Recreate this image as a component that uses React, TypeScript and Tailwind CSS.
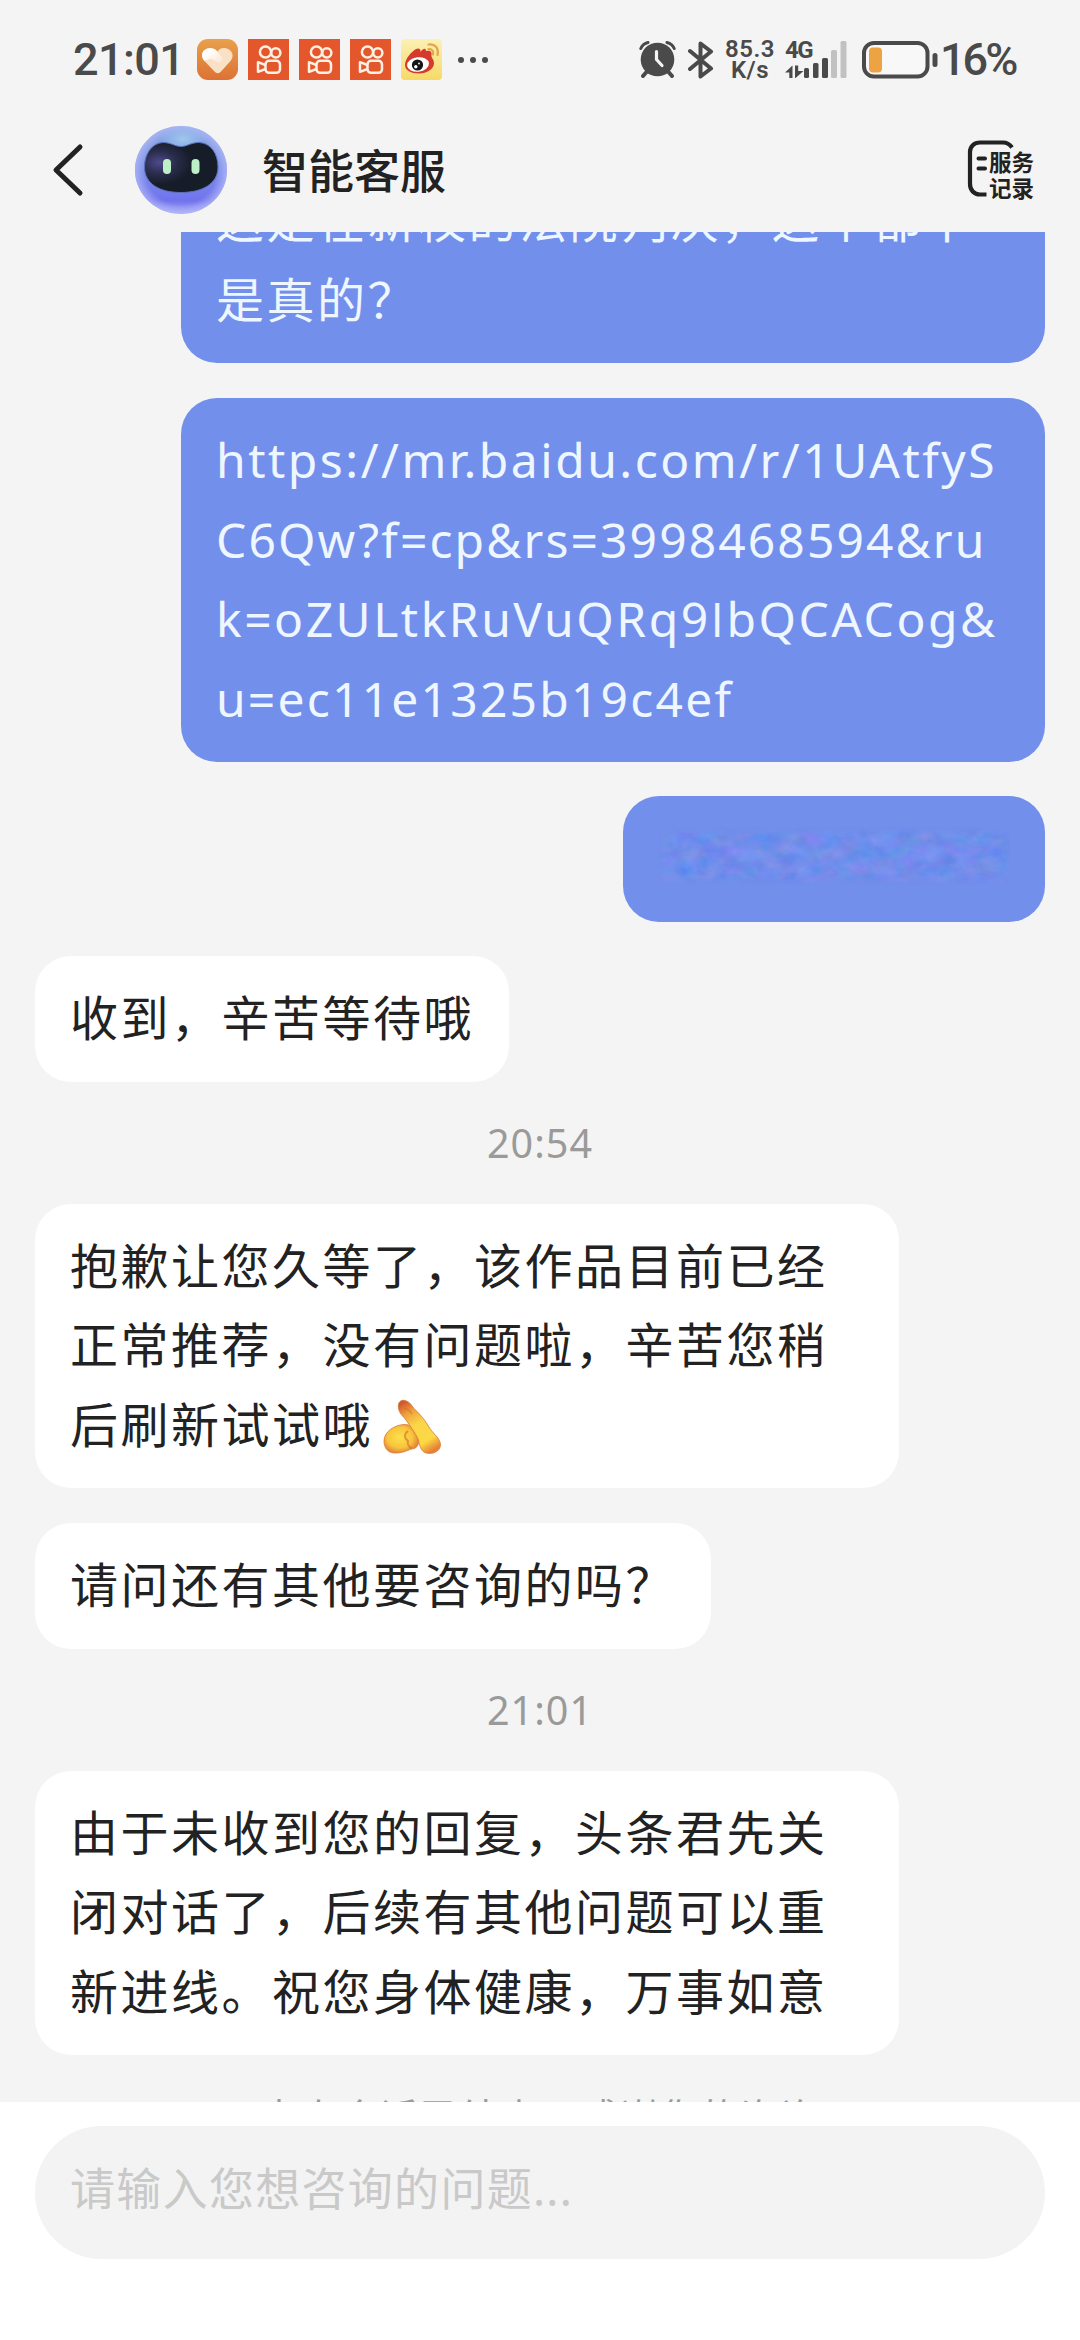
import clsx from 'clsx';
import React, { FC, ReactNode } from 'react';

const HeartIcon: FC = () => (
  <svg className="w-[41px] h-[41px]" viewBox="0 0 41 41">
    <defs>
      <linearGradient id="heart-bg" x1="0" y1="0" x2="0" y2="1">
        <stop offset="0" stopColor="#e9a04c" />
        <stop offset="1" stopColor="#dc7234" />
      </linearGradient>
      <linearGradient id="heart-lobe" x1="0" y1="0" x2="1" y2="1">
        <stop offset="0.3" stopColor="#fff" />
        <stop offset="1" stopColor="#fff" stopOpacity="0.15" />
      </linearGradient>
    </defs>
    <rect width="41" height="41" rx="11" fill="url(#heart-bg)" />
    <path
      d="M20.500 12.500C23 8.500 28 8 32 10.500C36.500 13.500 36.500 18.500 33.500 22L24 32.500C22 34.800 19.500 34.800 17.500 32.500L7.500 22C4 18 4.500 13 8.500 10.500C13 8 18 9 20.500 12.500Z"
      fill="#fbe0c8"
    />
    <path
      d="M8 10.800C12 8.300 17 9 19.500 12L25 18.500C26.500 21 24 24.500 21 23.500L14 19.500L7.500 22C4 18 4.300 13.200 8 10.800Z"
      fill="url(#heart-lobe)"
    />
  </svg>
);

const KuaishouIcon: FC = () => (
  <svg className="w-[41px] h-[41px]" viewBox="0 0 41 41">
    <rect width="41" height="41" fill="#e4572c" />
    <g fill="none" stroke="#fff0e2" strokeWidth="2.500" strokeLinejoin="round">
      <circle cx="17.500" cy="13" r="5.600" />
      <circle cx="27.800" cy="13.800" r="4.600" />
      <rect x="17.500" y="21.800" width="14.500" height="12" rx="3.600" />
      <path d="M17.500 26L10 23.200V32.800L17.500 30" />
    </g>
  </svg>
);

const WeiboIcon: FC = () => (
  <svg className="w-[41px] h-[41px]" viewBox="0 0 41 41">
    <defs>
      <linearGradient id="weibo-bg" x1="0" y1="0" x2="0" y2="1">
        <stop offset="0" stopColor="#fbf1b4" />
        <stop offset="1" stopColor="#f7d968" />
      </linearGradient>
    </defs>
    <rect width="41" height="41" rx="4" fill="url(#weibo-bg)" />
    <path
      d="M4 26C4 20 10 13 15 10C18 8.500 20 10 19.500 13C22 9.500 25 8.500 25 12C28 11 31.500 12 30.500 16C30 19 33 20 33 24C33 30 26 34.500 18 34.500C10 34.500 4 31.500 4 26Z"
      fill="#d63a2c"
    />
    <ellipse cx="17" cy="25.500" rx="11" ry="7.200" fill="#fff" transform="rotate(-6 17 25.500)" />
    <circle cx="16.500" cy="26" r="5.600" fill="#151515" />
    <circle cx="14.800" cy="27.800" r="1.700" fill="#fff" />
    <circle cx="18" cy="24.500" r="0.900" fill="#fff" />
    <g fill="none" stroke="#e5a44b" strokeWidth="2.200" strokeLinecap="round">
      <path d="M27.500 5.500C34 4.500 38 9 36.500 16" />
      <path d="M27.500 10.200C31 9.800 32.800 12 32 15.500" />
    </g>
  </svg>
);

const AlarmIcon: FC = () => (
  <svg className="w-[37px] h-[37px]" viewBox="0 0 37 37">
    <circle cx="18.500" cy="18.500" r="16.800" fill="#4a4a4a" />
    <g fill="none" stroke="#4a4a4a" strokeLinecap="round">
      <path d="M1.800 7.500C3 4.500 5.500 2.300 9 1.500M35.200 7.500C34 4.500 31.500 2.300 28 1.500" strokeWidth="3" />
      <path d="M7.500 31L4 35M29.500 31L33 35" strokeWidth="4" />
    </g>
    <path d="M17.500 10.500V18.500L23 24.500" fill="none" stroke="#f4f4f4" strokeWidth="3.200" strokeLinecap="round" />
  </svg>
);

const BluetoothIcon: FC = () => (
  <svg className="w-[26px] h-[38px]" viewBox="0 0 26 38">
    <path
      d="M2 10L23 27.500L12.500 35.500V2.500L23 10.500L2 28"
      fill="none"
      stroke="#4a4a4a"
      strokeWidth="4"
      strokeLinejoin="round"
      strokeLinecap="round"
    />
  </svg>
);

const SignalIcon: FC = () => (
  <svg className="w-[62px] h-[37px]" viewBox="0 0 62 37">
    <g fill="#4a4a4a">
      <path d="M0 31.500L7.500 24.500V37.500H4.300V31.500ZM10 24.500H13.200V30H18.500L10 37.500Z" />
      <rect x="19" y="27" width="5" height="10" rx="1.500" />
      <rect x="28" y="22" width="5.500" height="15" rx="1.500" />
      <rect x="37" y="17" width="6" height="20" rx="1.500" />
    </g>
    <g fill="#c1c1c1">
      <rect x="46" y="9" width="6" height="28" rx="1.500" />
      <rect x="55.500" y="0" width="6" height="37" rx="1.500" />
    </g>
  </svg>
);

const BatteryIcon: FC = () => (
  <svg className="w-[76px] h-[38px]" viewBox="0 0 76 38">
    <rect x="2" y="2" width="63.500" height="33.500" rx="10" fill="#f8f8f8" stroke="#4a4a4a" strokeWidth="4" />
    <rect x="7" y="6.500" width="13" height="25" rx="4" fill="#eda244" />
    <rect x="70.500" y="12" width="5" height="14" rx="2.500" fill="#4a4a4a" />
  </svg>
);

const StatusBar: FC = () => (
  <div className="flex items-center h-[118px] pt-px pl-[73px] text-[#4a4a4a] font-['Roboto',sans-serif] shrink-0">
    <span className="w-[124px] text-[45px] leading-[46px] font-medium tracking-[-0.6px] whitespace-nowrap">
      21:01
    </span>
    <div className="flex items-center gap-[10px]">
      <HeartIcon />
      <KuaishouIcon />
      <KuaishouIcon />
      <KuaishouIcon />
      <WeiboIcon />
    </div>
    <div className="flex gap-[6px] ml-[16px]">
      <span className="w-[6px] h-[6px] rounded-full bg-[#4a4a4a]" />
      <span className="w-[6px] h-[6px] rounded-full bg-[#4a4a4a]" />
      <span className="w-[6px] h-[6px] rounded-full bg-[#4a4a4a]" />
    </div>
    <div className="flex items-center ml-[151px]">
      <AlarmIcon />
      <div className="ml-[12px]">
        <BluetoothIcon />
      </div>
      <div className="flex flex-col items-center w-[52px] ml-[10px] text-[24px] leading-[21px] font-semibold tracking-[0.5px]">
        <span>85.3</span>
        <span>K/s</span>
      </div>
      <div className="relative ml-[9px]">
        <SignalIcon />
        <span className="absolute left-0 top-[-3px] text-[24px] leading-[24px] font-bold tracking-[-1.5px]">4G</span>
      </div>
      <div className="ml-[15px]">
        <BatteryIcon />
      </div>
      <span className="ml-[2px] text-[45px] leading-[46px] font-medium tracking-[-3px]">16%</span>
    </div>
  </div>
);

const Avatar: FC = () => (
  <svg className="w-[92px] h-[90px]" viewBox="0 0 92 90">
    <defs>
      <linearGradient id="bot-shell" x1="0" y1="0" x2="0" y2="1">
        <stop offset="0" stopColor="#86a4e0" />
        <stop offset="0.4" stopColor="#7f96e8" />
        <stop offset="0.85" stopColor="#7173ee" />
        <stop offset="1" stopColor="#a9aaf4" />
      </linearGradient>
      <radialGradient id="bot-edge" cx="0.5" cy="0.5" r="0.5">
        <stop offset="0.78" stopColor="#b4baf8" stopOpacity="0" />
        <stop offset="1" stopColor="#b4baf8" stopOpacity="0.75" />
      </radialGradient>
      <radialGradient id="bot-shine" cx="0.5" cy="0.5" r="0.5">
        <stop offset="0" stopColor="#9fc8ee" />
        <stop offset="1" stopColor="#9fc8ee" stopOpacity="0" />
      </radialGradient>
      <radialGradient id="bot-face" cx="0.2" cy="0.4" r="0.45">
        <stop offset="0" stopColor="#4f4a8c" />
        <stop offset="0.5" stopColor="#2a2d4c" />
        <stop offset="1" stopColor="#161c28" />
      </radialGradient>
    </defs>
    <ellipse cx="46" cy="45" rx="46" ry="44" fill="url(#bot-shell)" />
    <ellipse cx="46" cy="45" rx="46" ry="44" fill="url(#bot-edge)" />
    <ellipse cx="48" cy="14" rx="24" ry="13" fill="url(#bot-shine)" />
    <path
      d="M46 21.500C52 21.500 56 17.500 64 17.500C76 18 83 29 83 42C83 59 67 67.500 46 67.500C25 67.500 9.500 59 9.500 42C9.500 29 17 18 28 17.500C36 17.500 40 21.500 46 21.500Z"
      fill="url(#bot-face)"
      stroke="#5a72b8"
      strokeWidth="1"
    />
    <rect x="28" y="34" width="8" height="15" rx="4" fill="#bdf0c6" />
    <rect x="56.500" y="34" width="8" height="15" rx="4" fill="#bdf0c6" />
  </svg>
);

const Header: FC = () => (
  <div className="flex items-center h-[114px] pb-[10px] pl-[50px] pr-[44px] shrink-0">
    <svg className="w-[34px] h-[54px]" viewBox="0 0 34 54">
      <path
        d="M30 4L6 27L30 50"
        fill="none"
        stroke="#222"
        strokeWidth="5"
        strokeLinecap="round"
        strokeLinejoin="round"
      />
    </svg>
    <div className="ml-[51px]">
      <Avatar />
    </div>
    <h1 className="ml-[35px] text-[46px] leading-[60px] font-medium text-[#222]">智能客服</h1>
    <div className="relative w-[70px] h-[64px] ml-auto">
      <svg className="w-[70px] h-[64px]" viewBox="0 0 70 64">
        <path
          d="M46 9.500C43.500 6 41 4.500 37 4.500H14C8 4.500 4 8.500 4 14V46C4 52 8 56.500 14 56.500H20.500"
          fill="none"
          stroke="#222"
          strokeWidth="4.200"
        />
        <path d="M12.500 20.500H19M12.500 30.500H19" stroke="#222" strokeWidth="4" strokeLinecap="round" />
      </svg>
      <span className="absolute left-[23px] top-[12px] w-[46px] text-[22.500px] leading-[26px] font-bold text-[#222]">
        服务记录
      </span>
    </div>
  </div>
);

interface BubbleProps {
  own?: boolean;
  wide?: boolean;
  className?: string;
  children: ReactNode;
}

const Bubble: FC<BubbleProps> = ({ own, wide, className, children }) => (
  <div
    className={clsx(
      'px-[35px] pt-[22px] pb-[24px] rounded-[36px] text-[48px] leading-[79.5px] tracking-[2.5px] whitespace-nowrap shrink-0',
      own ? 'self-end bg-[#728fec] text-[#eef6ff]' : 'self-start bg-white text-[#222]',
      wide ? 'w-[864px]' : 'w-fit',
      className
    )}
  >
    {children}
  </div>
);

const Time: FC<{ children: ReactNode }> = ({ children }) => (
  <div className="h-[50px] mt-[36px] mb-[36px] text-center text-[39.5px] leading-[50px] tracking-[1px] text-[#9a9a9a]">
    {children}
  </div>
);

const Smudge: FC = () => (
  <svg className="w-[352px] h-[80px]" viewBox="0 0 352 80">
    <defs>
      <filter id="smudge" x="0" y="0" width="100%" height="100%" colorInterpolationFilters="sRGB">
        <feTurbulence type="fractalNoise" baseFrequency="0.05 0.07" numOctaves="3" seed="8" />
        <feColorMatrix values="0.5 0 0 0 0.19  0 0.25 0 0 0.425  0 0 0.2 0 0.82  0 0 0 0 0.5" />
      </filter>
      <filter id="soften">
        <feGaussianBlur stdDeviation="3" />
      </filter>
      <mask id="smudge-mask">
        <rect x="3" y="14" width="346" height="48" fill="#fff" filter="url(#soften)" />
      </mask>
    </defs>
    <g mask="url(#smudge-mask)">
      <rect width="352" height="80" filter="url(#smudge)" />
    </g>
  </svg>
);

const FoldedHands: FC = () => (
  <svg className="inline-block w-[60px] h-[56px] ml-[9px] align-[-12px]" viewBox="0 0 60 56">
    <defs>
      <radialGradient id="palm" cx="0.45" cy="0.45" r="0.6">
        <stop offset="0" stopColor="#fde04a" />
        <stop offset="0.6" stopColor="#f8c53c" />
        <stop offset="1" stopColor="#e0763a" />
      </radialGradient>
      <linearGradient id="fingers" x1="0.2" y1="0" x2="0.7" y2="1">
        <stop offset="0" stopColor="#d0582c" />
        <stop offset="0.2" stopColor="#eda03c" />
        <stop offset="0.45" stopColor="#fbd548" />
        <stop offset="0.8" stopColor="#fcd944" />
        <stop offset="1" stopColor="#e58238" />
      </linearGradient>
    </defs>
    <path
      d="M2 42C2 33 12 26 22 25.500C30 25 36 32 37 40C37 47 34 50 29 50C25 52 18 54.500 12 54C5 53.500 2 48 2 42Z"
      fill="url(#palm)"
      stroke="#dc7a38"
      strokeWidth="0.800"
    />
    <path d="M26 32C22 35 22 39 26 42C25 45 27 48 30 49.500" fill="none" stroke="#d06a2c" strokeWidth="2" opacity="0.600" />
    <path
      d="M16.500 9C15.500 3 19 0.500 23 1.500C27 2.500 29 5 31.500 9C37 14 43 21 47 28C51 35 58.500 39 58.500 46C58 53 50 55.500 44 54C38 52 38 46 36 40C33.500 34 28 27 24 21C20 16 17 14 16.500 9Z"
      fill="url(#fingers)"
      stroke="#d87a35"
      strokeWidth="0.800"
    />
    <path d="M22 9C25 10 28 11 30 15" fill="none" stroke="#d06a2c" strokeWidth="1.500" opacity="0.500" />
  </svg>
);

const App: FC = () => {
  return (
    <div className="flex flex-col w-[1080px] h-[2340px] overflow-hidden bg-[#f4f4f4] font-['Noto_Sans','Noto_Sans_CJK_SC',sans-serif]">
      <StatusBar />
      <Header />
      <main className="flex flex-col flex-1 min-h-0 px-[35px] overflow-hidden">
        <Bubble own wide className="-mt-[74px]">
          这是在新校的法院判决，这个都不
          <br />
          是真的？
        </Bubble>
        <Bubble own wide className="mt-[35px]">
          https://mr.baidu.com/r/1UAtfyS
          <br />
          <span className="tracking-[2.1px]">C6Qw?f=cp&amp;rs=3998468594&amp;ru</span>
          <br />
          k=oZULtkRuVuQRq9<span className="font-['Open_Sans']">I</span>bQCACog&amp;
          <br />
          <span className="tracking-[2.2px]">u=ec11e1325b19c4ef</span>
        </Bubble>
        <Bubble own className="flex items-center h-[126px] mt-[34px]">
          <Smudge />
        </Bubble>
        <Bubble className="mt-[34px]">收到，辛苦等待哦</Bubble>
        <Time>20:54</Time>
        <Bubble wide>
          抱歉让您久等了，该作品目前已经
          <br />
          正常推荐，没有问题啦，辛苦您稍
          <br />
          后刷新试试哦
          <FoldedHands />
        </Bubble>
        <Bubble className="mt-[35px]">请问还有其他要咨询的吗？</Bubble>
        <Time>21:01</Time>
        <Bubble wide>
          由于未收到您的回复，头条君先关
          <br />
          闭对话了，后续有其他问题可以重
          <br />
          新进线。祝您身体健康，万事如意
        </Bubble>
        <p className="mt-[31px] text-center text-[38px] leading-[60px] tracking-[2px] text-[#9a9a9a] shrink-0">
          本次会话已结束，感谢您的咨询
        </p>
      </main>
      <footer className="h-[238px] px-[35px] pt-[24px] bg-white shrink-0">
        <div className="flex items-center h-[133px] px-[35px] pb-[8px] rounded-full bg-[#f3f3f3] text-[45px] tracking-[1.300px] text-[#c9c9c9]">
          请输入您想咨询的问题...
        </div>
      </footer>
    </div>
  );
};

export default App;
